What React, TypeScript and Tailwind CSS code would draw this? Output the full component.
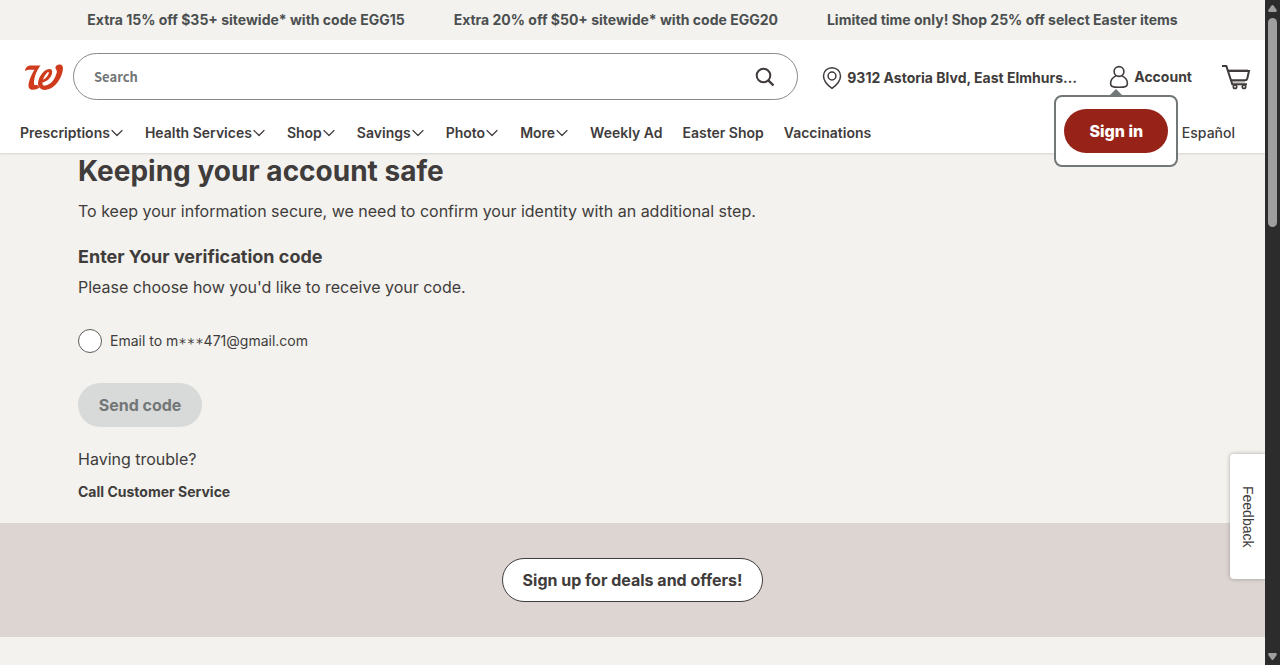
import type { ReactNode } from "react";

const promos = [
  "Extra 15% off $35+ sitewide* with code EGG15",
  "Extra 20% off $50+ sitewide* with code EGG20",
  "Limited time only! Shop 25% off select Easter items",
];

const menus = ["Prescriptions", "Health Services", "Shop", "Savings", "Photo", "More"];
const links = ["Weekly Ad", "Easter Shop", "Vaccinations"];

function Logo() {
  return (
    <svg width="40" height="28" viewBox="0 0 40 28" fill="#cf3b1c" aria-hidden="true">
      <path d="M1 8C1.200 4.500 3.500 2.400 7 2.400H16.500C15 4.500 13.600 6.500 12.300 9.500C10.600 13.500 9.700 17.500 10 20.800C10.200 22.400 11.500 22.600 13 21.800L15.500 24.600C12.500 26.800 8.500 27.500 6.300 26.200C3.900 24.700 4.200 21 5.600 17C6.900 13 8.600 9.700 10.500 6.800H7.200C4.500 6.700 2.500 6.900 1 8Z" />
      <path
        fillRule="evenodd"
        d="M15.500 24.600C13 22 14 17 16.500 12.800C19 8.500 22.300 6 25.300 6C28 6 28.800 8.200 27.800 11.200C26.600 15 23 18.300 18.500 19.600C18.200 22 19.200 23 21.300 22.600C27 21.600 31.500 15.500 32.800 9.200C33.200 7 31.500 6.500 31.400 4.800C31.400 2.800 33.300 1.600 35.500 1.400C38.300 1.300 39.300 3.400 38.900 6.500C37.800 15.500 30.500 26.700 20.500 26.900C18.500 26.900 16.800 26.200 15.500 24.600ZM19 16.800C22 15.500 24.300 12.500 24.800 10C25 8.900 24.200 8.800 23.400 9.500C21.500 11 19.800 14 19 16.800Z"
      />
    </svg>
  );
}

function Chevron() {
  return (
    <svg width="12" height="8" viewBox="0 0 12 8" fill="none" stroke="#403c3b" strokeWidth="1.2" strokeLinecap="round" strokeLinejoin="round" aria-hidden="true">
      <path d="M1 1.500L6 6.500L11 1.500" />
    </svg>
  );
}

function SearchIcon() {
  return (
    <svg width="20" height="20" viewBox="0 0 20 20" fill="none" stroke="#403c3b" strokeWidth="2" aria-hidden="true">
      <circle cx="8.500" cy="8.500" r="6.800" />
      <path d="M13.300 13.300L18.500 18.500" strokeWidth="2.400" />
    </svg>
  );
}

function PinIcon() {
  return (
    <svg width="20" height="24" viewBox="0 0 20 24" fill="none" stroke="#403c3b" strokeWidth="1.500" aria-hidden="true">
      <path d="M10 22.300C7.500 20.500 1.500 15.500 1.500 9.900C1.500 5.200 5.300 1.700 10 1.700C14.700 1.700 18.500 5.200 18.500 9.900C18.500 15.500 12.500 20.500 10 22.300Z" />
      <circle cx="10" cy="10" r="3.900" />
    </svg>
  );
}

function UserIcon() {
  return (
    <svg width="20" height="24" viewBox="0 0 20 24" fill="none" stroke="#403c3b" strokeWidth="1.600" aria-hidden="true">
      <circle cx="10" cy="6.500" r="4.900" />
      <path d="M7.200 10.600C3.800 12.300 1.600 15.500 1.600 18.600C1.600 21.300 3.200 22.300 10 22.300C16.800 22.300 18.400 21.300 18.400 18.600C18.400 15.500 16.200 12.300 12.800 10.600" />
    </svg>
  );
}

function CartIcon() {
  return (
    <svg width="30" height="26" viewBox="0 0 30 26" fill="none" stroke="#403c3b" strokeWidth="2" aria-hidden="true">
      <path d="M7 5.500H27" stroke="#b9b6b5" strokeWidth="1" />
      <path d="M11 18H24" stroke="#c9c6c5" strokeWidth="2" />
      <path d="M1 2H5.300L11.300 20.300H26" />
      <path d="M7 7H28L26.300 14.500C26 15.800 25.300 16.300 24 16.300H10" />
      <circle cx="14" cy="22.700" r="1.700" strokeWidth="1.700" />
      <circle cx="23" cy="22.700" r="1.700" strokeWidth="1.700" />
    </svg>
  );
}

function NavLink({ children }: { children: ReactNode }) {
  return (
    <a href="#" className="whitespace-nowrap">
      {children}
    </a>
  );
}

export default function App() {
  return (
    <div className="flex h-screen overflow-hidden bg-[#f3f2ee] font-['Inter',sans-serif] text-[#403c3b]">
      <div className="relative flex min-w-0 flex-1 flex-col">
        <div className="flex h-10 shrink-0 items-center justify-center gap-[49px] text-sm font-bold text-[#4b4f50]">
          {promos.map((promo) => (
            <a key={promo} href="#" className="whitespace-nowrap">
              {promo}
            </a>
          ))}
        </div>

        <header className="shrink-0 bg-white shadow-[0_1px_2px_rgba(0,0,0,0.12)]">
          <div className="flex h-[73px] items-center pr-3.5 pl-6">
            <a href="#" aria-label="Home" className="mr-[9px] shrink-0">
              <Logo />
            </a>
            <form className="flex h-[47px] min-w-0 flex-1 items-center rounded-full border border-[#8b8887] pr-[22px] pl-5">
              <input
                type="text"
                aria-label="Search"
                placeholder="Search"
                className="min-w-0 flex-1 bg-transparent font-['Noto_Sans_CJK_SC',sans-serif] text-[13px] font-bold outline-none placeholder:text-[#727676]"
              />
              <button type="button" aria-label="Submit search">
                <SearchIcon />
              </button>
            </form>
            <button type="button" className="ml-6 flex items-center gap-[5px] pt-0.5 text-sm font-bold">
              <PinIcon />
              <span className="min-w-[230px] text-left whitespace-nowrap">9312 Astoria Blvd, East Elmhurs…</span>
            </button>
            <div className="relative ml-8">
              <button type="button" className="flex items-center gap-[5px] text-sm font-bold">
                <UserIcon />
                Account
              </button>
              <div className="absolute top-[30px] -left-[55px] z-10 rounded-lg border-2 border-[#727777] bg-white px-2 py-3">
                <span className="absolute -top-2 left-[53px] h-0 w-0 border-x-[7px] border-b-[7px] border-x-transparent border-b-[#727777]" />
                <button type="button" className="h-11 w-[104px] rounded-full bg-[#972318] font-extrabold text-white">
                  Sign in
                </button>
              </div>
            </div>
            <a href="#" aria-label="Cart" className="ml-[29px]">
              <CartIcon />
            </a>
          </div>

          <nav className="flex h-10 items-center gap-5 pr-[30px] pl-5 text-sm font-semibold">
            {menus.map((menu) => (
              <button key={menu} type="button" className="flex items-center gap-px pr-0.5 whitespace-nowrap">
                {menu}
                <Chevron />
              </button>
            ))}
            {links.map((link) => (
              <NavLink key={link}>{link}</NavLink>
            ))}
            <a href="#" className="ml-auto font-medium">
              Español
            </a>
          </nav>
        </header>

        <main className="flex shrink-0 flex-col items-start px-[78px] pb-[19px]">
          <h1 className="text-[28px] leading-9 font-bold">Keeping your account safe</h1>
          <p className="mt-2.5 leading-6">
            To keep your information secure, we need to confirm your identity with an additional step.
          </p>
          <h2 className="mt-[22px] text-lg leading-6 font-bold">Enter Your verification code</h2>
          <p className="mt-1.5 leading-6">Please choose how you'd like to receive your code.</p>
          <label className="mt-[30px] flex h-6 items-center gap-2 text-sm">
            <input
              type="radio"
              name="method"
              className="h-6 w-6 appearance-none rounded-full border border-[#5f5c5b] bg-white checked:border-8"
            />
            <span className="leading-5">
              Email to m<span className="align-[-2px] font-['DejaVu_Sans_Mono',monospace] leading-none">***</span>471@gmail.com
            </span>
          </label>
          <button type="button" disabled className="mt-[30px] h-11 w-[124px] rounded-full bg-[#d8dad9] font-bold text-[#727676]">
            Send code
          </button>
          <p className="mt-5 leading-6">Having trouble?</p>
          <a href="#" className="mt-[9px] text-sm leading-6 font-bold">
            Call Customer Service
          </a>
        </main>

        <section className="flex h-[114px] shrink-0 items-center justify-center bg-[#ddd5d2]">
          <button type="button" className="h-11 rounded-full border border-[#403c3b] bg-white px-5 font-bold">
            Sign up for deals and offers!
          </button>
        </section>

        <button
          type="button"
          className="absolute right-0 bottom-[86px] flex h-[125px] w-[35px] items-center justify-center rounded-l bg-white font-['Liberation_Sans',sans-serif] text-sm shadow-[0_0_4px_rgba(60,60,60,0.4)] [writing-mode:vertical-rl]"
        >
          Feedback
        </button>
      </div>

      <div className="z-20 flex w-[15px] shrink-0 flex-col items-center bg-[#2c2c2c] py-1" aria-hidden="true">
        <svg width="9" height="9" viewBox="0 0 9 9" fill="#9f9f9f">
          <path d="M3.500 1.500Q4.500 0.300 5.500 1.500L8.700 6Q9 8 7.700 8H1.300Q0 8 0.300 6Z" />
        </svg>
        <div className="mt-[5px] h-[209px] w-[9px] rounded-full bg-[#9f9f9f]" />
        <svg width="9" height="9" viewBox="0 0 9 9" fill="#9f9f9f" className="mt-auto">
          <path d="M3.500 7.500Q4.500 8.700 5.500 7.500L8.700 3Q9 1 7.700 1H1.300Q0 1 0.300 3Z" />
        </svg>
      </div>
    </div>
  );
}
